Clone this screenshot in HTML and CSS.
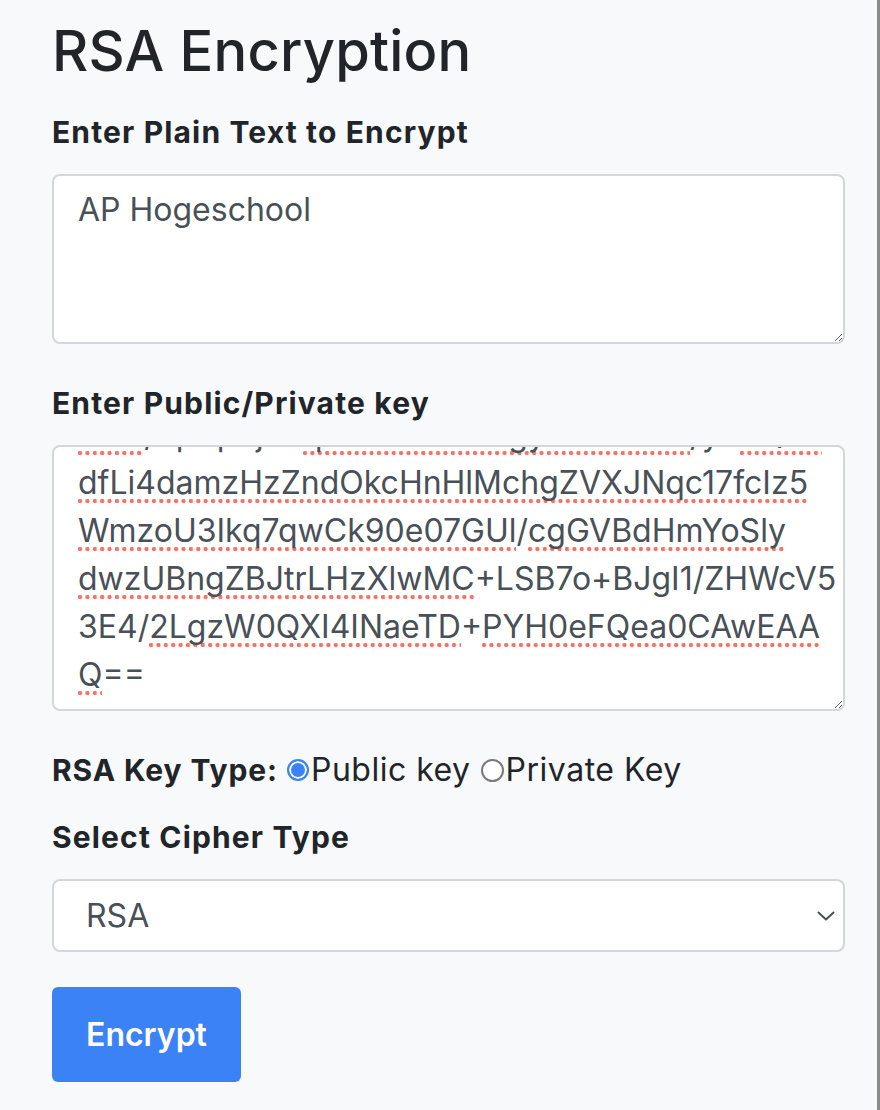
FILE: index.html
```html
<!DOCTYPE html>
<html lang="en">
<head>
<meta charset="utf-8">
<title>RSA Encryption</title>
<link rel="stylesheet" href="styles.css">
</head>
<body>
<div class="page">
  <main class="form">
    <h1 class="title">RSA Encryption</h1>

    <label class="label" for="plain">Enter Plain Text to Encrypt</label>
    <textarea id="plain" class="field plain" spellcheck="false">AP Hogeschool</textarea>

    <label class="label">Enter Public/Private key</label>
    <div class="field keybox">
      <div class="keylines">
        <div class="kline"><span class="sp">ktVa</span>/0p+p3j7+<span class="sp">qRmHbTxZdKgyNwVoLsE</span>/y+<span class="sp">KQzT</span></div>
        <div class="kline"><span class="sp">dfLi4damzHzZndOkcHnHlMchgZVXJNqc17fcIz5</span></div>
        <div class="kline"><span class="sp">WmzoU3Ikq7qwCk90e07GUl</span>/<span class="sp">cgGVBdHmYoSly</span></div>
        <div class="kline"><span class="sp">dwzUBngZBJtrLHzXlwMC</span>+LSB7o+BJgI1/ZHWcV5</div>
        <div class="kline">3E4/<span class="sp">2LgzW0QXI4INaeTD</span>+<span class="sp">PYH0eFQea0CAwEAA</span></div>
        <div class="kline"><span class="sp">Q</span>==</div>
      </div>
    </div>

    <div class="radio-row">
      <span class="inline-label">RSA Key Type:</span>
      <span class="radio radio-checked"></span>
      <span class="radio-text">Public key</span>
      <span class="radio radio-empty"></span>
      <span class="radio-text">Private Key</span>
    </div>

    <label class="label">Select Cipher Type</label>
    <div class="field select">
      <span class="select-value">RSA</span>
      <svg class="chevron" width="18" height="10" viewBox="0 0 18 10" aria-hidden="true">
        <path d="M1.5 1.5 L9 8.5 L16.5 1.5" fill="none" stroke="#495057" stroke-width="2" stroke-linecap="round" stroke-linejoin="round"/>
      </svg>
    </div>

    <button class="btn" type="button">Encrypt</button>
  </main>
  <div class="scroll-edge"></div>
</div>
</body>
</html>
```

FILE: styles.css
```css
html, body {
  margin: 0;
  padding: 0;
  background: #f8f9fa;
}

body {
  font-family: Inter, "Open Sans", "DejaVu Sans", sans-serif;
  color: #212529;
}

.page {
  display: flex;
  min-height: 1110px;
}

.form {
  flex: 1;
  display: flex;
  flex-direction: column;
  align-items: flex-start;
  padding: 0 32px 0 52px;
}

.scroll-edge {
  width: 3px;
  background: #8b8b8b;
  flex: none;
}

.title {
  margin: 18px 0 26px;
  font-size: 56px;
  font-weight: 500;
  line-height: 67px;
  letter-spacing: 0.2px;
  color: #212529;
}

.label {
  display: block;
  font-size: 30px;
  font-weight: 700;
  letter-spacing: 1.15px;
  line-height: 42px;
  margin: 0 0 21px;
  color: #212529;
}

.field {
  box-sizing: border-box;
  width: 793px;
  background: #fff;
  border: 2px solid #d3d6da;
  border-radius: 8px;
  font-family: inherit;
  font-size: 32px;
  line-height: 48px;
  color: #495057;
}

.plain {
  display: block;
  height: 170px;
  padding: 10px 24px;
  margin: 0 0 38px;
  resize: both;
  outline: none;
}

.keybox {
  height: 266px;
  padding: 10px 24px;
  margin: 0 0 35px;
  overflow: hidden;
  resize: both;
  display: flex;
  flex-direction: column;
  justify-content: flex-end;
}

.keylines {
  flex: none;
}

.kline {
  white-space: nowrap;
}

.sp {
  padding-bottom: 1px;
  background-image: radial-gradient(circle at 2px 2px, #f07565 1.9px, rgba(240, 117, 101, 0) 2.4px);
  background-size: 7.4px 4px;
  background-repeat: repeat-x;
  background-position: 0 100%;
}

.radio-row {
  display: flex;
  align-items: baseline;
  font-size: 32px;
  line-height: 48px;
  margin: 0 0 22px;
  color: #212529;
}

.inline-label {
  font-size: 30px;
  font-weight: 700;
  letter-spacing: 0.9px;
  margin-right: 9px;
}

.radio {
  box-sizing: border-box;
  flex: none;
  align-self: center;
  border-radius: 50%;
  background: #fff;
}

.radio-checked {
  width: 22px;
  height: 22px;
  border: 2px solid #3b82f6;
  box-shadow: inset 0 0 0 2px #fff;
  background: #3b82f6;
  margin-right: 2px;
}

.radio-empty {
  width: 23px;
  height: 23px;
  border: 2px solid #7a7a7a;
  margin: 0 2px 0 10px;
}

.radio-text {
  color: #212529;
  letter-spacing: 0.5px;
}

.select {
  height: 73px;
  padding: 0 8px 0 32px;
  margin: 0 0 35px;
  display: flex;
  align-items: center;
  justify-content: space-between;
}

.chevron {
  display: block;
}

.btn {
  height: 95px;
  padding: 0 34px;
  border: none;
  border-radius: 6px;
  background: #3b82f6;
  color: #fff;
  font-family: inherit;
  font-size: 32px;
  font-weight: 600;
  line-height: 48px;
  cursor: pointer;
}
```
